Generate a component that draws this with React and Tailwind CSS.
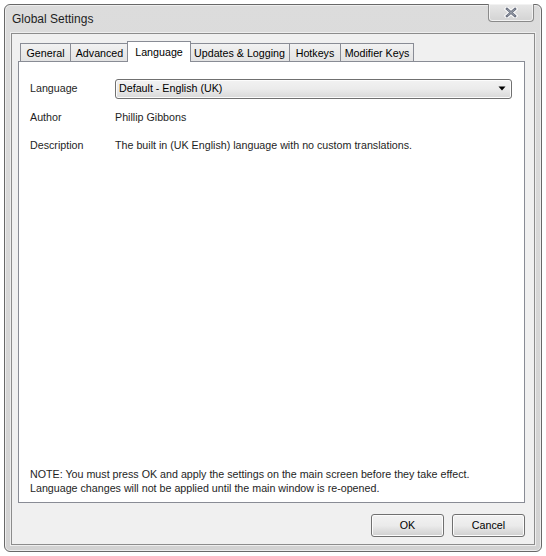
import { useState } from "react";

const tabs = [
  { name: "General", w: "w-[51px]" },
  { name: "Advanced", w: "w-[59px]" },
  { name: "Language", w: "w-[64px]" },
  { name: "Updates & Logging", w: "w-[101px]" },
  { name: "Hotkeys", w: "w-[52px]" },
  { name: "Modifier Keys", w: "w-[74px]" },
];

function CloseGlyph() {
  return (
    <svg width="14" height="11" viewBox="0 0 14 11">
      <path d="M3 2 L11 9 M11 2 L3 9" stroke="#ffffff" strokeWidth="4.5" strokeLinecap="square" />
      <path d="M3 2 L11 9 M11 2 L3 9" stroke="#6b7180" strokeWidth="2.5" strokeLinecap="square" />
      <path d="M3.5 2.5 L10.5 8.5 M10.5 2.5 L3.5 8.5" stroke="#a9aeb8" strokeWidth="0.8" />
    </svg>
  );
}

function Win7Button({ children, className = "" }) {
  return (
    <button
      className={`h-[23px] rounded-[3px] border border-[#707070] bg-linear-to-b from-[#f2f2f2] via-[#ebebeb] to-[#cfcfcf] shadow-[inset_0_0_0_1px_#fcfcfc] text-[10.7px] text-black ${className}`}
    >
      {children}
    </button>
  );
}

export default function App() {
  const [active, setActive] = useState("Language");

  return (
    <div className="w-[546px] h-[556px] bg-white pt-[4px] pl-[4px] font-['Liberation_Sans',Arial,sans-serif]">
      {/* window frame */}
      <div className="w-[538px] h-[548px] rounded-[6px] border border-[#686868] bg-linear-to-b from-[#dcdcdc] to-[#d2d2d2] shadow-[inset_0_0_0_1px_#eeeeee] flex flex-col">
        {/* title bar */}
        <div className="h-[28px] flex items-start justify-between pl-[7px] pr-[7px]">
          <span className="mt-[7px] text-[12px] leading-[15px] text-[#1e1e1e]">Global Settings</span>
          <div className="w-[46px] h-[18px] -mt-px rounded-b-[4px] border border-[#8a8a8a] border-t-0 bg-linear-to-b from-[#e8e8e8] to-[#d3d3d3] shadow-[inset_0_0_0_1px_#f2f2f2] flex items-center justify-center">
            <CloseGlyph />
          </div>
        </div>

        {/* client area */}
        <div className="mx-[6px] mb-[6px] flex-1 border border-[#8c8c8c] shadow-[0_0_0_1px_#eeeeee] bg-[#f0f0f0] flex flex-col">
          <div className="mt-[7px] ml-[6px] mr-[9px] flex flex-col">
            {/* tab strip */}
            <div className="h-[20px] flex items-end pl-[2px] text-[10.7px] text-black">
              {tabs.map((t) =>
                t.name === active ? (
                  <div
                    key={t.name}
                    className={`${t.w} h-[21px] -mb-px -ml-[2px] -mr-[1px] relative z-10 border border-b-0 border-[#898c95] bg-white flex items-start justify-center pt-[2px]`}
                  >
                    {t.name}
                  </div>
                ) : (
                  <div
                    key={t.name}
                    onClick={() => setActive(t.name)}
                    className={`${t.w} h-[18px] -ml-px first:ml-0 border border-b-0 border-[#898c95] bg-linear-to-b from-[#f2f2f2] to-[#e3e3e3] flex items-center justify-center pt-[2px] cursor-default`}
                  >
                    {t.name}
                  </div>
                )
              )}
            </div>

            {/* tab panel */}
            <div className="h-[442px] border border-[#898c95] bg-white flex flex-col justify-between pl-[11px] pr-[12px] pt-[17px] pb-[7px] text-[10.7px] text-[#1e1e1e]">
              <div className="flex flex-col">
                <div className="flex items-center h-[20px] -mt-px">
                  <span className="w-[85px]">Language</span>
                  <div className="flex-1 h-[20px] mt-px rounded-[3px] border border-[#707070] bg-linear-to-b from-[#f2f2f2] via-[#ebebeb] to-[#d8d8d8] shadow-[inset_0_0_0_1px_#fcfcfc] flex items-center justify-between pl-[3px] pr-[5px] text-black">
                    <span className="-mt-px">Default - English (UK)</span>
                    <svg width="8" height="5" viewBox="0 0 8 5">
                      <path d="M0.5 0.5 H7.5 L4 4.5 Z" fill="#000" />
                    </svg>
                  </div>
                </div>
                <div className="flex items-center h-[14px] mt-[12px]">
                  <span className="w-[85px]">Author</span>
                  <span>Phillip Gibbons</span>
                </div>
                <div className="flex items-center h-[14px] mt-[14px]">
                  <span className="w-[85px]">Description</span>
                  <span>The built in (UK English) language with no custom translations.</span>
                </div>
              </div>
              <div className="leading-[14px]">
                <p>NOTE: You must press OK and apply the settings on the main screen before they take effect.</p>
                <p>Language changes will not be applied until the main window is re-opened.</p>
              </div>
            </div>
          </div>

          {/* buttons */}
          <div className="mt-[11px] mr-[9px] flex justify-end gap-[8px]">
            <Win7Button className="w-[73px]">OK</Win7Button>
            <Win7Button className="w-[73px]">Cancel</Win7Button>
          </div>
        </div>
      </div>
    </div>
  );
}
